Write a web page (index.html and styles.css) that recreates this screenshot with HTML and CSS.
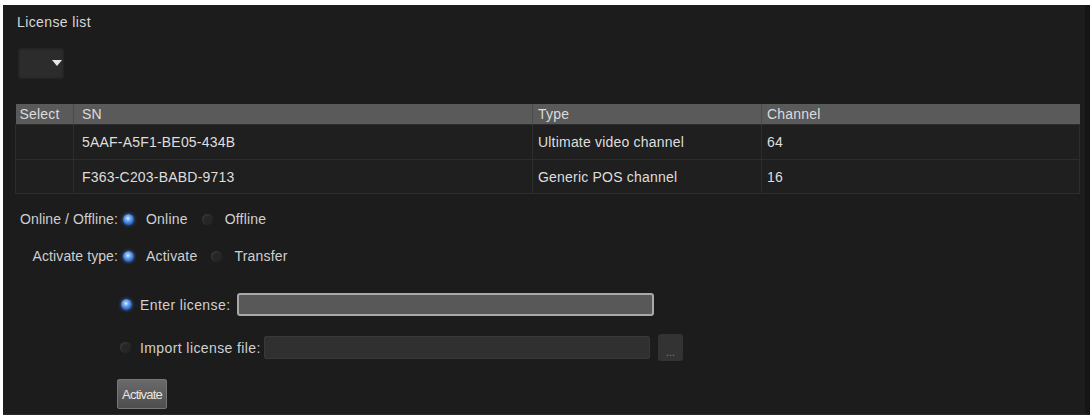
FILE: index.html
```html
<!DOCTYPE html>
<html>
<head>
<meta charset="utf-8">
<link rel="stylesheet" href="styles.css">
</head>
<body>
<div class="panel">
  <div class="title">License list</div>
  <div class="dropdown"><span class="caret"></span></div>
  <table class="grid">
    <thead>
      <tr><th class="c-sel">Select</th><th class="c-sn">SN</th><th class="c-type">Type</th><th>Channel</th></tr>
    </thead>
    <tbody>
      <tr class="r1"><td></td><td class="c-sn">5AAF-A5F1-BE05-434B</td><td>Ultimate video channel</td><td>64</td></tr>
      <tr class="r2"><td></td><td class="c-sn">F363-C203-BABD-9713</td><td>Generic POS channel</td><td>16</td></tr>
    </tbody>
  </table>

  <div class="frow row-online">
    <span class="flabel">Online / Offline:</span>
    <span class="radio on"></span><span class="opt">Online</span>
    <span class="radio off gap-a"></span><span class="opt">Offline</span>
  </div>
  <div class="frow row-type">
    <span class="flabel">Activate type:</span>
    <span class="radio on"></span><span class="opt">Activate</span>
    <span class="radio off gap-b"></span><span class="opt">Transfer</span>
  </div>

  <div class="lrow row-enter">
    <span class="radio on"></span>
    <span class="llabel l-enter">Enter license:</span>
    <span class="input active"></span>
  </div>
  <div class="lrow row-import">
    <span class="radio off"></span>
    <span class="llabel l-import">Import license file:</span>
    <span class="input file"></span>
    <span class="browse">...</span>
  </div>
  <div class="btnrow"><span class="btn">Activate</span></div>
</div>
</body>
</html>
```
FILE: styles.css
```css
html, body {
  margin: 0;
  padding: 0;
  background: #ffffff;
}
body {
  width: 1092px;
  height: 418px;
  overflow: hidden;
  font-family: "Liberation Sans", Arial, sans-serif;
  font-size: 14px;
  letter-spacing: 0.2px;
  color: #d6d6d6;
}
.panel {
  margin: 5px 2px 0 3px;
  height: 410px;
  box-sizing: border-box;
  background: #1c1c1c;
  border-right: 5px solid #151515;
  border-bottom: 1px solid #2a2a2a;
  padding: 9px 3px 0 12px;
}
.title {
  line-height: 16px;
  height: 16px;
  margin-left: 2px;
  color: #d8d8d8;
  letter-spacing: 0.4px;
}
.dropdown {
  margin: 18px 0 0 3px;
  width: 46px;
  height: 31px;
  background: #2c2c2c;
  border-radius: 2px;
  box-shadow: inset 0 0 3px rgba(0,0,0,0.5);
  position: relative;
}
.caret {
  position: absolute;
  left: 34px;
  top: 12px;
  width: 0;
  height: 0;
  border-left: 5px solid transparent;
  border-right: 5px solid transparent;
  border-top: 6px solid #e8e8e8;
}
.grid {
  margin-top: 25px;
  width: 1065px;
  border-collapse: collapse;
  table-layout: fixed;
}
.grid th {
  background: #5a5a5a;
  color: #dcdcdc;
  font-weight: normal;
  text-align: left;
  height: 20px;
  padding: 0 5px;
  border-left: 1px solid #4a4a4a;
  line-height: 20px;
}
.grid th:first-child { border-left: none; padding-left: 4px; }
.grid .c-sel { width: 58px; box-sizing: border-box; }
.grid .c-sn { padding-left: 8px; }
.grid th.c-sn { width: 459px; box-sizing: border-box; }
.grid th.c-type { width: 229px; box-sizing: border-box; }
.grid td {
  background: #1f1f1f;
  border: 1px solid #2d2d2d;
  padding: 0 5px;
  color: #dedede;
}
.grid tr.r1 td { height: 34px; }
.grid tr.r2 td { height: 33px; }
.frow {
  display: flex;
  align-items: center;
  height: 20px;
}
.row-online { margin-top: 15px; }
.row-type { margin-top: 17px; }
.flabel {
  width: 106px;
  text-align: right;
  color: #cfcfcf;
  margin-right: 5px;
  margin-left: -3px;
  white-space: nowrap;
  letter-spacing: 0.1px;
}
.radio {
  width: 11px;
  height: 11px;
  border-radius: 50%;
  flex: none;
}
.radio.on {
  background: radial-gradient(circle at 45% 40%, #e8f2ff 0, #7fb0f0 25%, #2f6fd0 60%, #1b3f80 100%);
  box-shadow: 0 0 3px 1px rgba(60,120,220,0.5);
}
.radio.off {
  background: #262626;
  box-shadow: inset 1px 1px 2px #3a3a3a;
}
.opt {
  margin-left: 12px;
  color: #d0d0d0;
}
.gap-a { margin-left: 14px; }
.gap-b { margin-left: 14px; }
.lrow {
  display: flex;
  align-items: center;
  padding-left: 105px;
}
.row-enter { margin-top: 27px; height: 23px; padding-left: 106px; }
.row-import { margin-top: 18px; height: 27px; }
.llabel {
  margin-left: 8px;
  color: #d0d0d0;
  white-space: nowrap;
  letter-spacing: 0.4px;
}
.l-enter { width: 97px; }
.l-import { width: 124px; margin-left: 9px; }
.input {
  height: 23px;
  box-sizing: border-box;
  border-radius: 3px;
}
.input.active {
  width: 417px;
  background: #585858;
  border: 2px solid #a8a8a8;
}
.input.file {
  width: 386px;
  background: #303030;
  border: 1px solid #383838;
  border-radius: 2px;
}
.browse {
  margin-left: 8px;
  width: 25px;
  height: 27px;
  background: #333333;
  border-radius: 3px;
  color: #888;
  font-size: 10px;
  display: flex;
  align-items: flex-end;
  justify-content: center;
  line-height: 16px;
}
.btnrow {
  margin-top: 18px;
  padding-left: 102px;
}
.btn {
  display: inline-block;
  width: 50px;
  height: 30px;
  line-height: 30px;
  text-align: center;
  background: linear-gradient(#6a6a6a, #4e4e4e);
  border: 1px solid #777;
  box-sizing: border-box;
  border-radius: 2px;
  color: #e6e6e6;
  font-size: 13px;
  letter-spacing: -0.8px;
}
```
